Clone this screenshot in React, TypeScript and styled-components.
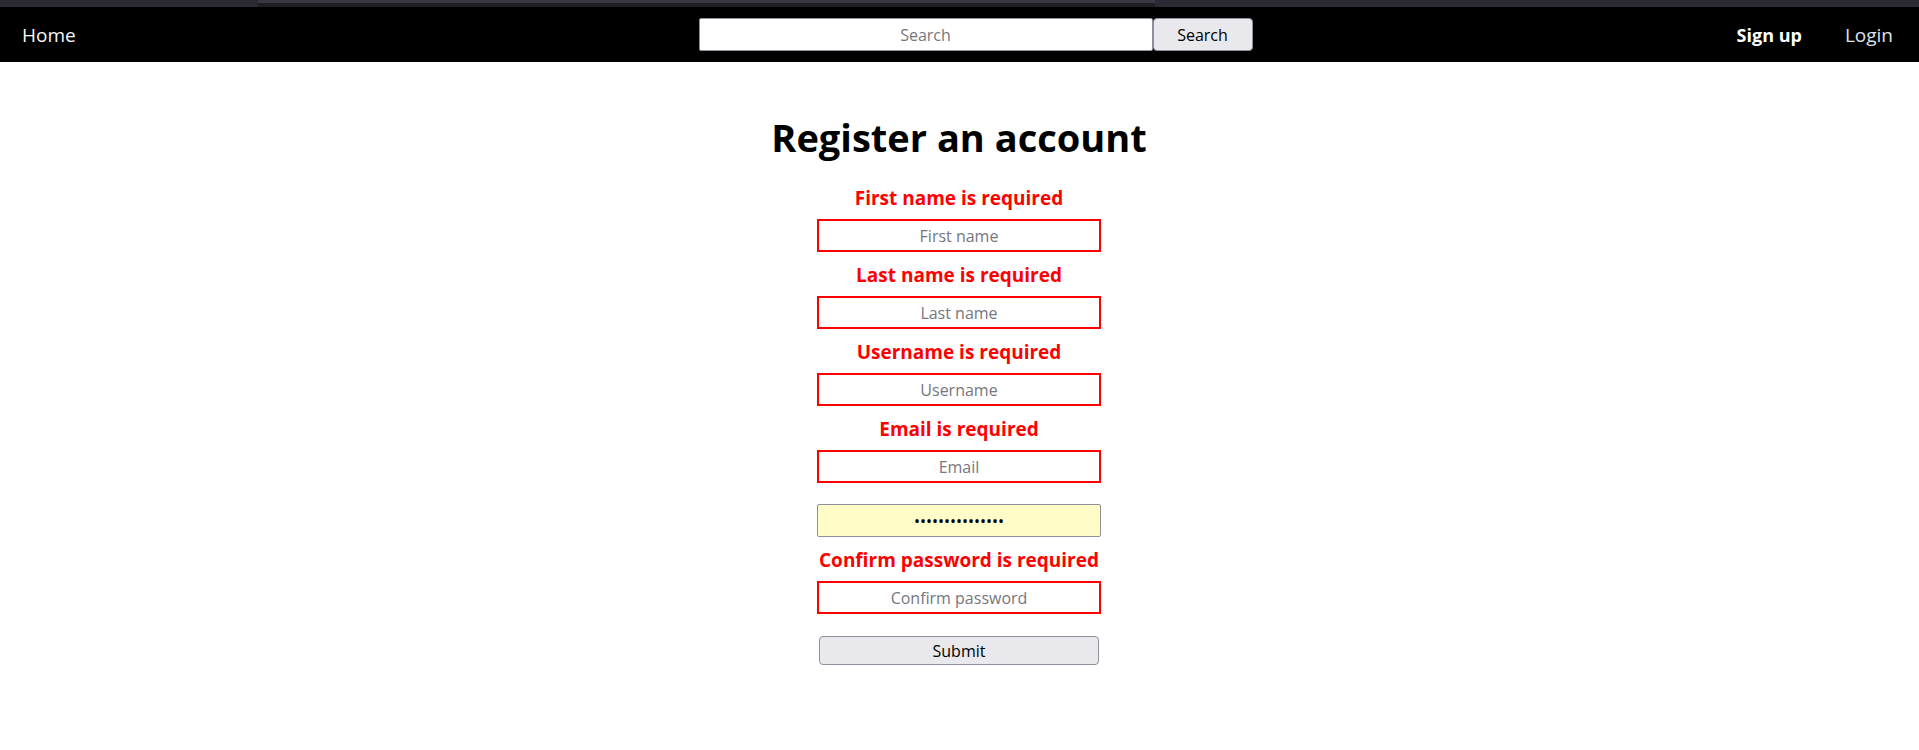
import React from "react";
import styled, { createGlobalStyle } from "styled-components";

const GlobalStyle = createGlobalStyle`
  html, body {
    margin: 0;
    padding: 0;
    background: #ffffff;
  }
  body {
    font-family: "Open Sans", "Noto Sans", sans-serif;
    color: #000;
  }
  * { box-sizing: border-box; }
`;

const Page = styled.div`
  display: flex;
  flex-direction: column;
  min-height: 750px;
`;

const TopStrip = styled.div`
  height: 7px;
  background: #2b2a33;
  display: flex;
`;

const TabHint = styled.div`
  margin-left: 258px;
  width: 897px;
  height: 100%;
  background: linear-gradient(#3a3943 0, #3a3943 3px, #1f1e25 3px, #1f1e25 100%);
`;

const NavBar = styled.nav`
  height: 55px;
  background: #000;
  display: flex;
  align-items: center;
  padding: 0 26px 0 22px;
`;

const NavSide = styled.div<{ $align: "start" | "end" }>`
  flex: 1;
  display: flex;
  align-items: center;
  justify-content: ${(p) => (p.$align === "start" ? "flex-start" : "flex-end")};
  gap: 43px;
`;

const NavLink = styled.a<{ $bold?: boolean; $tint?: string }>`
  font-size: ${(p) => (p.$bold ? "18px" : "19px")};
  font-weight: ${(p) => (p.$bold ? 700 : 400)};
  color: ${(p) => p.$tint ?? "#ffffff"};
  text-decoration: none;
  cursor: pointer;
  line-height: 26px;
`;

const SearchForm = styled.form`
  display: flex;
  align-items: center;
  margin-left: 36px;
`;

const SearchInput = styled.input`
  width: 454px;
  height: 33px;
  border: 1px solid #8f8f9d;
  border-radius: 2px;
  background: #fff;
  padding: 0 4px;
  font-family: "Open Sans", sans-serif;
  font-size: 16px;
  text-align: center;
  color: #000;
  outline: none;
  &::placeholder {
    color: #76767e;
  }
`;

const SearchButton = styled.button`
  width: 100px;
  height: 33px;
  border: 1px solid #8f8f9d;
  border-radius: 4px;
  background: #e9e9ed;
  font-family: "Open Sans", sans-serif;
  font-size: 16px;
  color: #000;
  padding: 0;
  cursor: pointer;
`;

const Main = styled.main`
  display: flex;
  flex-direction: column;
  align-items: center;
  padding-right: 1px;
`;

const Title = styled.h1`
  margin: 49px 0 22px;
  font-size: 38px;
  line-height: 52px;
  font-weight: 700;
  color: #000;
`;

const Form = styled.form`
  display: flex;
  flex-direction: column;
  align-items: center;
  gap: 10px;
`;

const Field = styled.div<{ $bare?: boolean }>`
  display: flex;
  flex-direction: column;
  align-items: center;
  gap: 8px;
  margin-top: ${(p) => (p.$bare ? "11px" : "0")};
`;

const ErrorText = styled.span`
  font-size: 19px;
  line-height: 26px;
  font-weight: 700;
  color: #ff0000;
`;

const TextInput = styled.input<{ $invalid?: boolean; $filled?: boolean }>`
  width: 284px;
  height: 33px;
  padding: 0 4px;
  border: ${(p) => (p.$invalid ? "2px solid #ff0000" : "1px solid #8f8f9d")};
  border-radius: ${(p) => (p.$invalid ? "0" : "2px")};
  background: ${(p) => (p.$filled ? "#fffcc8" : "#ffffff")};
  font-family: "Open Sans", sans-serif;
  font-size: 16px;
  text-align: center;
  color: #000;
  outline: none;
  &::placeholder {
    color: #76767e;
  }
`;

const SubmitButton = styled.button`
  width: 280px;
  height: 29px;
  margin-top: 12px;
  border: 1px solid #8f8f9d;
  border-radius: 4px;
  background: #e9e9ed;
  font-family: "Open Sans", sans-serif;
  font-size: 16px;
  color: #000;
  padding: 0;
  cursor: pointer;
`;

type FieldDef = {
  placeholder: string;
  error?: string;
  type?: string;
  value?: string;
};

const fields: FieldDef[] = [
  { placeholder: "First name", error: "First name is required" },
  { placeholder: "Last name", error: "Last name is required" },
  { placeholder: "Username", error: "Username is required" },
  { placeholder: "Email", error: "Email is required" },
  { placeholder: "Password", type: "password", value: "passwordpasswor" },
  { placeholder: "Confirm password", error: "Confirm password is required", type: "password" },
];

export default function App() {
  return (
    <Page>
      <GlobalStyle />
      <TopStrip>
        <TabHint />
      </TopStrip>
      <NavBar>
        <NavSide $align="start">
          <NavLink $tint="#f6f8fa">Home</NavLink>
        </NavSide>
        <SearchForm onSubmit={(e) => e.preventDefault()}>
          <SearchInput placeholder="Search" />
          <SearchButton type="submit">Search</SearchButton>
        </SearchForm>
        <NavSide $align="end">
          <NavLink $bold>Sign up</NavLink>
          <NavLink $tint="#dbe4ee">Login</NavLink>
        </NavSide>
      </NavBar>
      <Main>
        <Title>Register an account</Title>
        <Form onSubmit={(e) => e.preventDefault()}>
          {fields.map((f) => (
            <Field key={f.placeholder} $bare={!f.error}>
              {f.error && <ErrorText>{f.error}</ErrorText>}
              <TextInput
                type={f.type ?? "text"}
                placeholder={f.placeholder}
                $invalid={!!f.error}
                $filled={!!f.value}
                defaultValue={f.value}
              />
            </Field>
          ))}
          <SubmitButton type="submit">Submit</SubmitButton>
        </Form>
      </Main>
    </Page>
  );
}
